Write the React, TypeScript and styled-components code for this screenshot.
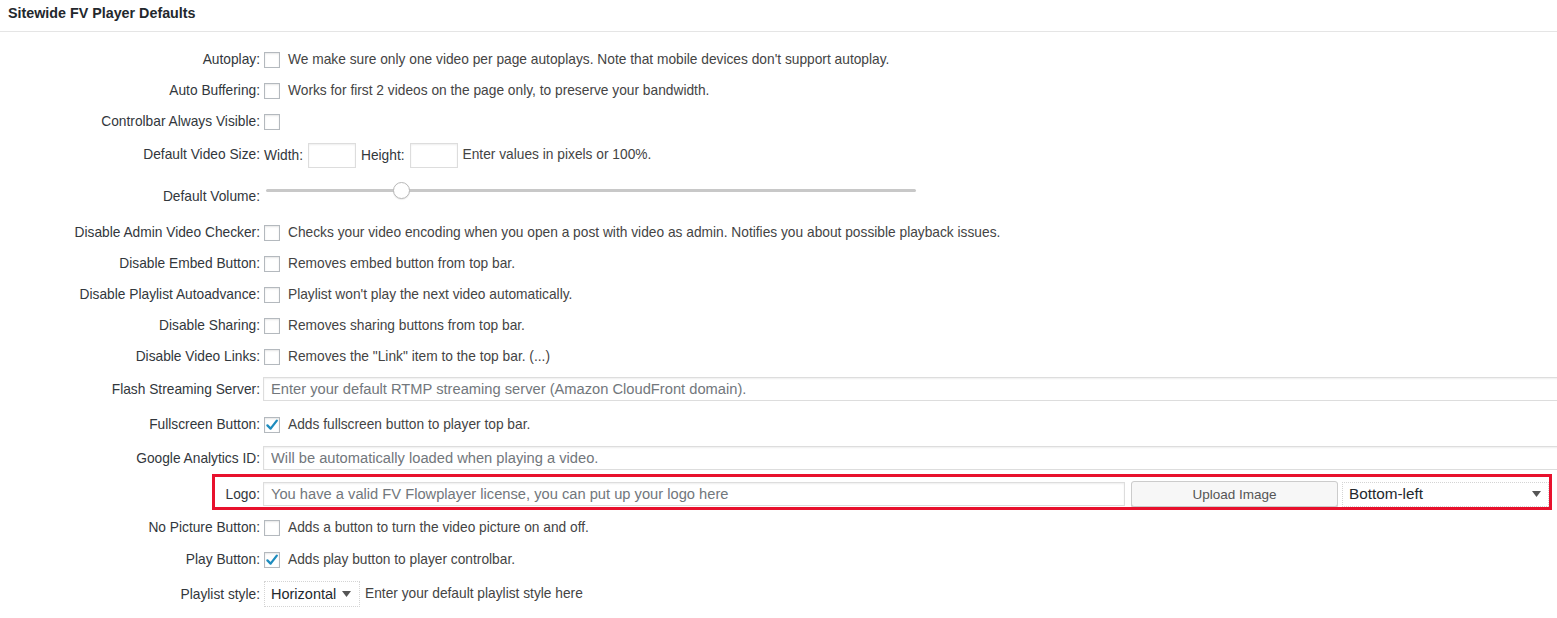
import React from "react";
import styled, { createGlobalStyle } from "styled-components";

const GlobalStyle = createGlobalStyle`
  html, body {
    margin: 0;
    padding: 0;
    background: #fff;
    overflow: hidden;
  }
  body {
    font-family: "Liberation Sans", Arial, Helvetica, sans-serif;
    font-size: 13.75px;
    color: #444;
  }
`;

type CheckRow = { label: string; checked?: boolean; text?: string; h?: number };

const topChecks: CheckRow[] = [
  { label: "Autoplay:", text: "We make sure only one video per page autoplays. Note that mobile devices don't support autoplay." },
  { label: "Auto Buffering:", text: "Works for first 2 videos on the page only, to preserve your bandwidth." },
  { label: "Controlbar Always Visible:" },
];

const midChecks: CheckRow[] = [
  { label: "Disable Admin Video Checker:", text: "Checks your video encoding when you open a post with video as admin. Notifies you about possible playback issues." },
  { label: "Disable Embed Button:", text: "Removes embed button from top bar." },
  { label: "Disable Playlist Autoadvance:", text: "Playlist won't play the next video automatically." },
  { label: "Disable Sharing:", text: "Removes sharing buttons from top bar." },
  { label: "Disable Video Links:", text: 'Removes the "Link" item to the top bar. (...)' },
];

const App: React.FC = () => {
  const volume = 0.2;

  return (
    <Page>
      <GlobalStyle />
      <Header>Sitewide FV Player Defaults</Header>
      <Form>
        {topChecks.map((row) => (
          <CheckboxRow key={row.label} {...row} />
        ))}

        <Row h={36}>
          <Label>Default Video Size:</Label>
          <Field>
            <Inline>Width:</Inline>
            <SmallInput />
            <Inline>Height:</Inline>
            <SmallInput />
            <Desc>Enter values in pixels or 100%.</Desc>
          </Field>
        </Row>

        <Row h={44}>
          <Label shift={3}>Default Volume:</Label>
          <Field>
            <Track>
              <Thumb style={{ left: `${volume * (650 - 17)}px` }} />
            </Track>
          </Field>
        </Row>

        {midChecks.map((row) => (
          <CheckboxRow key={row.label} {...row} />
        ))}

        <Row h={34}>
          <Label shift={2}>Flash Streaming Server:</Label>
          <Field>
            <TextInput placeholder="Enter your default RTMP streaming server (Amazon CloudFront domain)." />
          </Field>
        </Row>

        <CheckboxRow label="Fullscreen Button:" checked text="Adds fullscreen button to player top bar." h={36} shift={2} />

        <Row h={32}>
          <Label shift={1}>Google Analytics ID:</Label>
          <Field>
            <TextInput placeholder="Will be automatically loaded when playing a video." />
          </Field>
        </Row>

        <Row h={40}>
          <Highlight />
          <Label shift={1}>Logo:</Label>
          <Field>
            <TextInput w={862} placeholder="You have a valid FV Flowplayer license, you can put up your logo here" />
            <UploadButton>Upload Image</UploadButton>
            <WideSelect>
              <span>Bottom-left</span>
              <Arrow />
            </WideSelect>
          </Field>
        </Row>

        <CheckboxRow label="No Picture Button:" text="Adds a button to turn the video picture on and off." h={27} />
        <CheckboxRow label="Play Button:" checked text="Adds play button to player controlbar." h={36} shift={1} />

        <Row h={33}>
          <Label shift={2}>Playlist style:</Label>
          <Field>
            <SmallSelect>
              <span>Horizontal</span>
              <Arrow />
            </SmallSelect>
            <Desc>Enter your default playlist style here</Desc>
          </Field>
        </Row>
      </Form>
    </Page>
  );
};

export default App;

const CheckboxRow: React.FC<CheckRow & { shift?: number }> = ({ label, checked, text, h = 31, shift = 0 }) => (
  <Row h={h}>
    <Label shift={shift}>{label}</Label>
    <Field shift={shift}>
      <Checkbox>
        {checked && (
          <svg width="14" height="14" viewBox="0 0 14 14">
            <path d="M2.4 7.4 L5.6 10.6 L11.8 2.6" fill="none" stroke="#1e8cbe" strokeWidth="2.3" strokeLinecap="round" strokeLinejoin="round" />
          </svg>
        )}
      </Checkbox>
      {text && <Desc>{text}</Desc>}
    </Field>
  </Row>
);

const Arrow: React.FC = () => (
  <svg width="9" height="6" viewBox="0 0 9 6">
    <polygon points="0,0 9,0 4.5,6" fill="#555" />
  </svg>
);

const Page = styled.div`
  width: 100%;
  overflow: hidden;
`;

const Header = styled.h2`
  margin: 0;
  box-sizing: border-box;
  height: 32px;
  padding: 5px 8px 0;
  line-height: 16px;
  font-size: 14.3px;
  font-weight: bold;
  color: #23282d;
  border-bottom: 1px solid #e5e5e5;
`;

const Form = styled.div`
  display: flex;
  flex-direction: column;
  padding-top: 12px;
`;

const Row = styled.div<{ h: number }>`
  position: relative;
  display: grid;
  grid-template-columns: 260px 1fr;
  column-gap: 4px;
  align-items: center;
  height: ${({ h }) => h}px;
`;

const Label = styled.div<{ shift?: number }>`
  text-align: right;
  color: #32373c;
  white-space: nowrap;
  line-height: 18px;
  padding-top: ${({ shift = 0 }) => shift}px;
`;

const Field = styled.div<{ shift?: number }>`
  display: flex;
  align-items: center;
  white-space: nowrap;
  min-width: 0;
  padding-top: ${({ shift = 0 }) => shift}px;
`;

const Checkbox = styled.span`
  box-sizing: border-box;
  width: 16px;
  height: 16px;
  flex: none;
  display: flex;
  align-items: center;
  justify-content: center;
  border: 1px solid #b4b9be;
  background: #fff;
  box-shadow: inset 0 1px 2px rgba(0, 0, 0, 0.1);
  margin-right: 8px;
`;

const Desc = styled.span`
  color: #444;
  line-height: 18px;
`;

const Inline = styled.span`
  color: #32373c;
  margin-right: 5px;
`;

const SmallInput = styled.span`
  box-sizing: border-box;
  width: 48px;
  height: 25px;
  flex: none;
  border: 1px solid #ddd;
  box-shadow: inset 0 1px 2px rgba(0, 0, 0, 0.07);
  background: #fff;
  margin-right: 5px;
`;

const Track = styled.div`
  position: relative;
  margin-left: 2px;
  width: 650px;
  height: 3px;
  background: #c8c8c8;
  border-radius: 2px;
  margin-bottom: 10px;
`;

const Thumb = styled.span`
  position: absolute;
  top: -7px;
  box-sizing: border-box;
  width: 17px;
  height: 17px;
  border-radius: 50%;
  background: #fff;
  border: 1px solid #b8b8b8;
  box-shadow: 0 1px 1px rgba(0, 0, 0, 0.08);
`;

const TextInput = styled.input<{ w?: number }>`
  box-sizing: border-box;
  margin: 0 0 0 -1px;
  width: ${({ w }) => (w ? `${w}px` : "1400px")};
  flex: none;
  height: 24px;
  padding: 0 7px;
  border: 1px solid #ddd;
  box-shadow: inset 0 1px 2px rgba(0, 0, 0, 0.07);
  background: #fff;
  font-family: "Liberation Sans", Arial, Helvetica, sans-serif;
  font-size: 14.7px;
  color: #32373c;
  outline: none;
  &::placeholder {
    color: #72777c;
    opacity: 1;
  }
`;

const UploadButton = styled.button`
  box-sizing: border-box;
  width: 207px;
  height: 26px;
  margin-left: 6px;
  flex: none;
  border: 1px solid #ccc;
  border-radius: 3px;
  background: #f7f7f7;
  box-shadow: 0 1px 0 #ccc;
  color: #555;
  font-family: "Liberation Sans", Arial, Helvetica, sans-serif;
  font-size: 13.5px;
  padding: 0;
`;

const SelectBox = styled.div`
  box-sizing: border-box;
  display: flex;
  align-items: center;
  justify-content: space-between;
  flex: none;
  border: 1px dotted #d4d4d4;
  background: #fff;
  color: #23282d;
`;

const WideSelect = styled(SelectBox)`
  width: 207px;
  height: 25px;
  margin-left: 4px;
  padding: 0 7px 0 6px;
  font-size: 15.3px;
`;

const SmallSelect = styled(SelectBox)`
  width: 96px;
  height: 26px;
  padding: 0 8px 0 6px;
  margin-right: 5px;
  font-size: 14.5px;
`;

const Highlight = styled.span`
  position: absolute;
  left: 212px;
  right: 5px;
  top: 0;
  height: 36px;
  box-sizing: border-box;
  border: 3px solid #e8112d;
  pointer-events: none;
`;
